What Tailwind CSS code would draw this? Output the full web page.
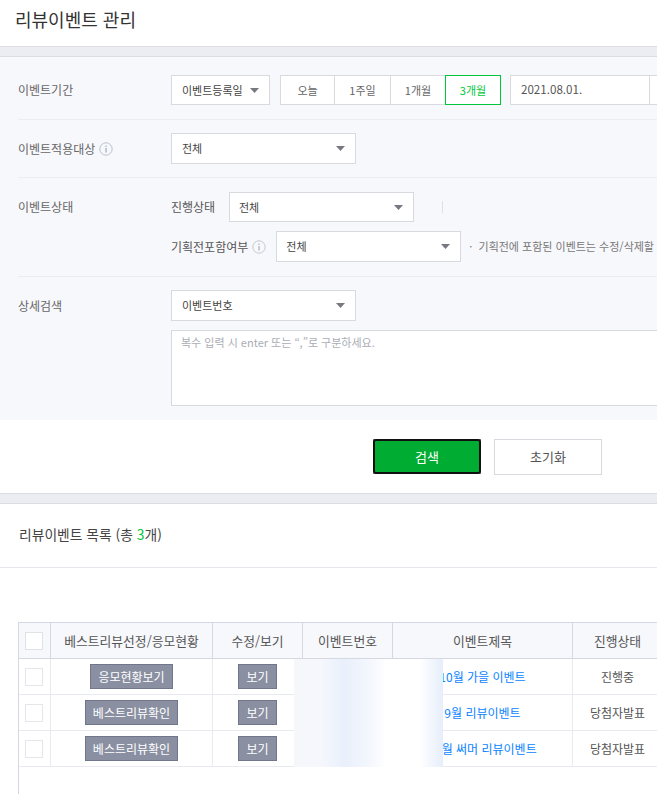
<!DOCTYPE html>
<html lang="ko">
<head>
<meta charset="utf-8">
<script src="https://cdn.jsdelivr.net/npm/@tailwindcss/browser@4"></script>
<title>리뷰이벤트 관리</title>
</head>
<body class="m-0 bg-white">
<div class="relative w-[657px] h-[794px] overflow-hidden bg-white font-['Noto_Sans_CJK_KR','Noto_Sans',sans-serif] text-[12px] text-[#333]">

  <header class="h-[46px] pl-[15px] pb-[8px] flex items-center text-[18px] leading-none text-[#333]">리뷰이벤트 관리</header>
  <div class="h-[11px] bg-[#ebedf2] border-y border-[#dcdde2]"></div>

  <section class="bg-[#f7f8fc] w-[1000px] h-[363px]">
    <div class="ml-[18px] pt-[18px] pb-[14px] flex items-start border-b border-[#ebedf2] h-[63px]">
      <div class="w-[153px] h-[30px] flex items-center text-[#666]">이벤트기간</div>
      <div class="w-[99px] h-[30px] bg-white border border-[#d8dae0] flex items-center justify-between pl-[10px] pr-[10px] text-[11px] text-[#444]">
        <span>이벤트등록일</span>
        <svg class="w-[9px] h-[5px]" viewBox="0 0 9 5"><polygon points="0,0 9,0 4.5,5" fill="#77797f"/></svg>
      </div>
      <div class="ml-[10px] flex h-[30px] text-[11px] text-[#666]">
        <div class="w-[55px] bg-white border border-[#d8dae0] flex items-center justify-center">오늘</div>
        <div class="w-[57px] -ml-px bg-white border border-[#d8dae0] flex items-center justify-center">1주일</div>
        <div class="w-[56px] -ml-px bg-white border border-[#d8dae0] flex items-center justify-center">1개월</div>
        <div class="w-[56px] -ml-px relative bg-white border border-[#00c73c] text-[#00c73c] flex items-center justify-center">3개월</div>
      </div>
      <div class="ml-[9px] flex h-[30px]">
        <div class="w-[140px] bg-white border border-[#d8dae0] flex items-center pl-[10px] text-[11.6px] text-[#555]">2021.08.01.</div>
        <div class="w-[140px] -ml-px bg-white border border-[#d8dae0]"></div>
      </div>
    </div>

    <div class="ml-[18px] pt-[13px] flex items-start border-b border-[#ebedf2] h-[58px]">
      <div class="w-[153px] h-[31px] flex items-center gap-[4px] text-[#666]">
        <span>이벤트적용대상</span>
        <svg class="w-[14px] h-[14px]" viewBox="0 0 14 14" fill="none"><circle cx="7" cy="7" r="6.2" stroke="#b9c0cc"/><rect x="6.4" y="6" width="1.3" height="4.5" fill="#9fb0c4"/><rect x="6.4" y="3.6" width="1.3" height="1.3" fill="#9fb0c4"/></svg>
      </div>
      <div class="w-[185px] h-[31px] bg-white border border-[#d8dae0] flex items-center justify-between pl-[10px] pr-[10px] text-[11px] text-[#444]">
        <span>전체</span>
        <svg class="w-[9px] h-[5px]" viewBox="0 0 9 5"><polygon points="0,0 9,0 4.5,5" fill="#77797f"/></svg>
      </div>
    </div>

    <div class="ml-[18px] pt-[14px] flex items-start border-b border-[#ebedf2] h-[99px]">
      <div class="w-[153px] h-[30px] flex items-center text-[#666]">이벤트상태</div>
      <div class="flex flex-col gap-[9px]">
        <div class="flex items-center h-[30px]">
          <span class="w-[58px] text-[#555]">진행상태</span>
          <div class="w-[185px] h-[30px] bg-white border border-[#d8dae0] flex items-center justify-between pl-[9px] pr-[10px] text-[11px] text-[#444]">
            <span>전체</span>
            <svg class="w-[9px] h-[5px]" viewBox="0 0 9 5"><polygon points="0,0 9,0 4.5,5" fill="#77797f"/></svg>
          </div>
          <div class="ml-[28px] w-[1px] h-[12px] bg-[#dfe1e6]"></div>
        </div>
        <div class="flex items-center h-[31px]">
          <span class="text-[#555]">기획전포함여부</span>
          <svg class="ml-[4px] w-[14px] h-[14px]" viewBox="0 0 14 14" fill="none"><circle cx="7" cy="7" r="6.2" stroke="#c4c8d0"/><rect x="6.4" y="6" width="1.3" height="4.5" fill="#b0b4bc"/><rect x="6.4" y="3.6" width="1.3" height="1.3" fill="#b0b4bc"/></svg>
          <div class="ml-[10px] w-[185px] h-[31px] bg-white border border-[#d8dae0] flex items-center justify-between pl-[9px] pr-[10px] text-[11px] text-[#444]">
            <span>전체</span>
            <svg class="w-[9px] h-[5px]" viewBox="0 0 9 5"><polygon points="0,0 9,0 4.5,5" fill="#77797f"/></svg>
          </div>
          <span class="ml-[8px] text-[11px] whitespace-nowrap text-[#777]">· &nbsp;기획전에 포함된 이벤트는 수정/삭제할 수 없습니다.</span>
        </div>
      </div>
    </div>

    <div class="ml-[18px] pt-[13px] flex items-start">
      <div class="w-[153px] h-[31px] flex items-center text-[#666]">상세검색</div>
      <div class="flex flex-col gap-[9px]">
        <div class="w-[185px] h-[31px] bg-white border border-[#d8dae0] flex items-center justify-between pl-[10px] pr-[10px] text-[11px] text-[#444]">
          <span>이벤트번호</span>
          <svg class="w-[9px] h-[5px]" viewBox="0 0 9 5"><polygon points="0,0 9,0 4.5,5" fill="#77797f"/></svg>
        </div>
        <div class="w-[700px] h-[76px] bg-white border border-[#d8dae0] pl-[9px] pt-[3px] text-[11px] text-[#aaadb5]">복수 입력 시 enter 또는 “,”로 구분하세요.</div>
      </div>
    </div>
  </section>

  <div class="h-[73px] pt-[19px] pl-[373px] flex items-start gap-[13px]">
    <div class="w-[108px] h-[35px] bg-[#5f8f73]">
      <button class="w-full h-full rounded-[3px] border-2 border-[#111] bg-[#00ac32] text-white text-[13px]">검색</button>
    </div>
    <button class="w-[108px] h-[36px] bg-white border border-[#d8dae0] text-[#555] text-[13px]">초기화</button>
  </div>
  <div class="h-[11px] bg-[#ebedf2] border-y border-[#dcdde2]"></div>

  <div class="h-[64px] pl-[19px] pb-[2px] flex items-center border-b border-[#e6e7ec] text-[13.8px] text-[#444]">
    <span>리뷰이벤트 목록 (총 <span class="text-[#00c73c]">3</span>개)</span>
  </div>

  <div class="mt-[54px] ml-[18px] w-[800px] h-[172px] border-l border-t border-[#d5d8e2]">
    <div class="grid grid-cols-[32px_162px_90px_90px_180px_90px] h-[36px] bg-[#f7f8fc] border-b border-[#d5d8e2] text-[12.8px] text-[#555] items-stretch">
      <div class="border-r border-[#d5d8e2] flex items-center justify-center pr-[1px]"><span class="w-[18px] h-[18px] bg-white border border-[#e0e2e8]"></span></div>
      <div class="border-r border-[#d5d8e2] flex items-center justify-center">베스트리뷰선정/응모현황</div>
      <div class="border-r border-[#d5d8e2] flex items-center justify-center">수정/보기</div>
      <div class="border-r border-[#d5d8e2] flex items-center justify-center">이벤트번호</div>
      <div class="border-r border-[#d5d8e2] flex items-center justify-center">이벤트제목</div>
      <div class="border-r border-[#d5d8e2] flex items-center justify-center">진행상태</div>
    </div>

    <div class="grid grid-cols-[32px_162px_90px_90px_180px_90px] h-[36px] border-b border-[#e9eaef] text-[#555]">
      <div class="border-r border-[#e9eaef] flex items-center justify-center pr-[1px]"><span class="w-[18px] h-[18px] bg-white border border-[#e4e6ea]"></span></div>
      <div class="border-r border-[#e9eaef] flex items-center justify-center"><span class="w-[83px] h-[25px] bg-[#8a90a2] border border-[#70778c] text-white flex items-center justify-center">응모현황보기</span></div>
      <div class="border-r border-[#e9eaef] flex items-center justify-center"><span class="w-[39px] h-[25px] bg-[#8a90a2] border border-[#70778c] text-white flex items-center justify-center">보기</span></div>
      <div class="border-r border-[#e9eaef]"></div>
      <div class="border-r border-[#e9eaef] flex items-center justify-center text-[#0a84ff]">10월 가을 이벤트</div>
      <div class="border-r border-[#e9eaef] flex items-center justify-center">진행중</div>
    </div>

    <div class="grid grid-cols-[32px_162px_90px_90px_180px_90px] h-[36px] border-b border-[#e9eaef] text-[#555]">
      <div class="border-r border-[#e9eaef] flex items-center justify-center pr-[1px]"><span class="w-[18px] h-[18px] bg-white border border-[#e4e6ea]"></span></div>
      <div class="border-r border-[#e9eaef] flex items-center justify-center"><span class="w-[93px] h-[25px] bg-[#8a90a2] border border-[#70778c] text-white flex items-center justify-center">베스트리뷰확인</span></div>
      <div class="border-r border-[#e9eaef] flex items-center justify-center"><span class="w-[39px] h-[25px] bg-[#8a90a2] border border-[#70778c] text-white flex items-center justify-center">보기</span></div>
      <div class="border-r border-[#e9eaef]"></div>
      <div class="border-r border-[#e9eaef] flex items-center justify-center text-[#0a84ff]">9월 리뷰이벤트</div>
      <div class="border-r border-[#e9eaef] flex items-center justify-center">당첨자발표</div>
    </div>

    <div class="grid grid-cols-[32px_162px_90px_90px_180px_90px] h-[36px] border-b border-[#e9eaef] text-[#555]">
      <div class="border-r border-[#e9eaef] flex items-center justify-center pr-[1px]"><span class="w-[18px] h-[18px] bg-white border border-[#e4e6ea]"></span></div>
      <div class="border-r border-[#e9eaef] flex items-center justify-center"><span class="w-[93px] h-[25px] bg-[#8a90a2] border border-[#70778c] text-white flex items-center justify-center">베스트리뷰확인</span></div>
      <div class="border-r border-[#e9eaef] flex items-center justify-center"><span class="w-[39px] h-[25px] bg-[#8a90a2] border border-[#70778c] text-white flex items-center justify-center">보기</span></div>
      <div class="border-r border-[#e9eaef]"></div>
      <div class="border-r border-[#e9eaef] flex items-center justify-center text-[#0a84ff]">08월 써머 리뷰이벤트</div>
      <div class="border-r border-[#e9eaef] flex items-center justify-center">당첨자발표</div>
    </div>
  </div>

  <div class="absolute left-[294px] top-[659px] w-[149px] h-[108px] bg-[linear-gradient(90deg,#f6f7fb_0%,#f5f7fc_18%,#e9f0fb_34%,#f3f6fd_50%,#ffffff_62%,#ffffff_84%,#e6eefa_100%)]"></div>
</div>
</body>
</html>
